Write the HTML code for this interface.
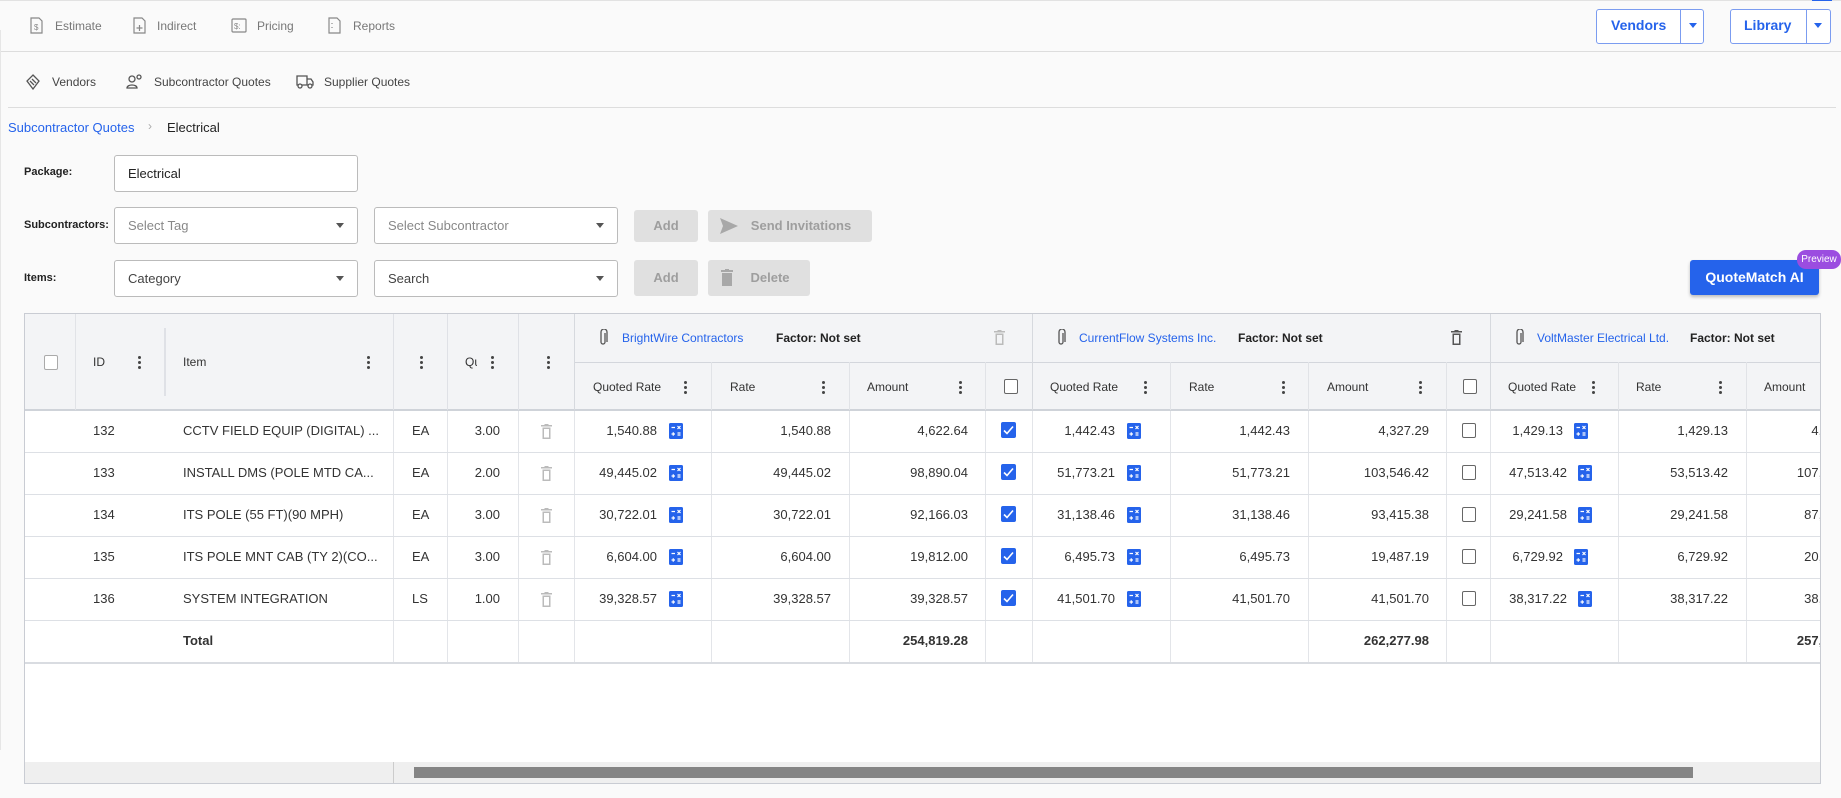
<!DOCTYPE html>
<html><head><meta charset="utf-8"><style>
*{box-sizing:border-box;margin:0;padding:0}
body{width:1841px;height:798px;background:#fafafa;font-family:"Liberation Sans",sans-serif;color:#333;position:relative;overflow:hidden;font-size:13px}
.a{position:absolute;white-space:nowrap}
.nav{font-size:12px;color:#777;top:19px}
.nav2{font-size:12px;color:#444;top:75px}
.lbl{font-size:11px;font-weight:bold;color:#222}
.inp{position:absolute;border:1px solid #bbb;border-radius:3px;background:#fff;height:37px;line-height:35px;padding-left:13px;font-size:13px}
.ph{color:#888}
.car{position:absolute;right:13px;top:15px;width:0;height:0;border-left:4px solid transparent;border-right:4px solid transparent;border-top:5px solid #555}
.btn{position:absolute;background:#e0e0e0;color:#9e9e9e;font-weight:bold;border-radius:3px;height:32px;line-height:32px;text-align:center;font-size:13px}
.vl{position:absolute;top:0;width:1px;background:#e3e5e9}
.hl{position:absolute;left:0;height:1px;background:#dde0e5}
.r{position:absolute;height:42px;line-height:42px;white-space:nowrap}
.rt{text-align:right}
.dots{position:absolute;width:3px}
.dots i{display:block;width:3px;height:3px;border-radius:2px;background:#444;margin-bottom:2px}
.cb{position:absolute;width:14px;height:15px;border:1.5px solid #666;border-radius:2px;background:#fff}
.hd{position:absolute;font-size:12px;color:#333}
.vn{color:#2563eb;font-size:12px}
.fc{font-weight:bold;font-size:12px;color:#222}
</style></head><body>
<div class="a" style="left:0;top:0;width:1841px;height:1px;background:#e2e2e2"></div>
<div class="a" style="left:1812px;top:0;width:20px;height:1px;background:#2563eb"></div>
<svg class="a" style="left:30px;top:17px" width="13" height="17" viewBox="0 0 13 17" fill="none" stroke="#888" stroke-width="1.2"><path d="M1 1h8l3 3v12H1z"/><text x="4" y="13" font-size="8" fill="#888" stroke="none" font-family="Liberation Sans">$</text></svg>
<div class="a nav" style="left:55px">Estimate</div>
<svg class="a" style="left:133px;top:17px" width="13" height="17" viewBox="0 0 13 17" fill="none" stroke="#888" stroke-width="1.2"><path d="M1 1h8l3 3v12H1z M6.5 8v6 M3.5 11h6"/></svg>
<div class="a nav" style="left:157px">Indirect</div>
<svg class="a" style="left:231px;top:18px" width="16" height="15" viewBox="0 0 16 15" fill="none" stroke="#888" stroke-width="1.2"><rect x="1" y="1" width="14" height="13" rx="1"/><text x="3" y="11" font-size="8" fill="#888" stroke="none" font-family="Liberation Sans">$:</text></svg>
<div class="a nav" style="left:257px">Pricing</div>
<svg class="a" style="left:328px;top:17px" width="13" height="17" viewBox="0 0 13 17" fill="none" stroke="#888" stroke-width="1.2"><path d="M1 1h8l3 3v12H1z M4 6v1 M4 10v1"/></svg>
<div class="a nav" style="left:353px">Reports</div>
<div class="a" style="left:1596px;top:9px;width:108px;height:35px;border:1px solid #7b9cf0;border-radius:3px;background:#fff"></div>
<div class="a" style="left:1680px;top:9px;width:1px;height:35px;background:#7b9cf0"></div>
<div class="a" style="left:1611px;top:17px;color:#2563eb;font-weight:bold;font-size:14px">Vendors</div>
<div class="a" style="left:1689px;top:23px;border-left:4px solid transparent;border-right:4px solid transparent;border-top:5px solid #2563eb"></div>
<div class="a" style="left:1730px;top:9px;width:101px;height:35px;border:1px solid #7b9cf0;border-radius:3px;background:#fff"></div>
<div class="a" style="left:1806px;top:9px;width:1px;height:35px;background:#7b9cf0"></div>
<div class="a" style="left:1744px;top:17px;color:#2563eb;font-weight:bold;font-size:14px">Library</div>
<div class="a" style="left:1814px;top:23px;border-left:4px solid transparent;border-right:4px solid transparent;border-top:5px solid #2563eb"></div>
<div class="a" style="left:0;top:51px;width:1841px;height:1px;background:#ddd"></div>
<svg class="a" style="left:25px;top:74px" width="16" height="16" viewBox="0 0 16 16" fill="none" stroke="#555" stroke-width="1.3"><path d="M8 1l6 6-6 8-6-8z M5 7l4 4 M7 5l4 4"/></svg>
<div class="a nav2" style="left:52px">Vendors</div>
<svg class="a" style="left:126px;top:74px" width="17" height="15" viewBox="0 0 17 15" fill="none" stroke="#555" stroke-width="1.3"><circle cx="6" cy="5" r="3"/><path d="M1 14c0-4 10-4 10 0z"/><circle cx="13" cy="3" r="2"/></svg>
<div class="a nav2" style="left:154px">Subcontractor Quotes</div>
<svg class="a" style="left:296px;top:75px" width="18" height="14" viewBox="0 0 18 14" fill="none" stroke="#555" stroke-width="1.3"><path d="M1 1h10v9H1z M11 4h4l2 3v3h-6"/><circle cx="4" cy="11" r="2" fill="#fafafa"/><circle cx="14" cy="11" r="2" fill="#fafafa"/></svg>
<div class="a nav2" style="left:324px">Supplier Quotes</div>
<div class="a" style="left:8px;top:107px;width:1828px;height:1px;background:#ddd"></div>
<div class="a" style="left:8px;top:120px;color:#2563eb;font-size:13px">Subcontractor Quotes</div>
<div class="a" style="left:148px;top:119px;color:#aaa;font-size:12px">›</div>
<div class="a" style="left:167px;top:120px;font-size:13px;color:#222">Electrical</div>
<div class="a lbl" style="left:24px;top:166px">Package:</div>
<div class="inp" style="left:114px;top:155px;width:244px;color:#222">Electrical</div>
<div class="a lbl" style="left:24px;top:219px">Subcontractors:</div>
<div class="inp ph" style="left:114px;top:207px;width:244px">Select Tag<span class="car"></span></div>
<div class="inp ph" style="left:374px;top:207px;width:244px">Select Subcontractor<span class="car"></span></div>
<div class="btn" style="left:634px;top:210px;width:64px">Add</div>
<div class="btn" style="left:708px;top:210px;width:164px;padding-left:22px">Send Invitations</div>
<svg class="a" style="left:720px;top:218px" width="18" height="16" viewBox="0 0 18 16"><path d="M0 0l18 8-18 8 3-8z" fill="#a8a8a8"/></svg>
<div class="a lbl" style="left:24px;top:272px">Items:</div>
<div class="inp" style="left:114px;top:260px;width:244px;color:#444">Category<span class="car"></span></div>
<div class="inp" style="left:374px;top:260px;width:244px;color:#444">Search<span class="car"></span></div>
<div class="btn" style="left:634px;top:260px;width:64px;height:36px;line-height:36px">Add</div>
<div class="btn" style="left:708px;top:260px;width:102px;height:36px;line-height:36px;padding-left:22px">Delete</div>
<svg class="a" style="left:721px;top:269px" width="12" height="17" viewBox="0 0 12 17"><path d="M0 1h12v2H0z M4 0h4v1H4z M1 4h10v13H1z" fill="#a8a8a8"/></svg>
<div class="a" style="left:1690px;top:260px;width:129px;height:35px;background:#2563eb;border-radius:3px;color:#fff;font-weight:bold;font-size:14px;line-height:35px;text-align:center;box-shadow:0 2px 3px rgba(0,0,0,.25)">QuoteMatch AI</div>
<div class="a" style="left:1797px;top:250px;width:44px;height:19px;background:#9b4de0;border-radius:9px;color:#fff;font-size:10px;line-height:19px;text-align:center">Preview</div>

<div class="a" style="left:24px;top:313px;width:1797px;height:471px;border:1px solid #c9ccd3;overflow:hidden;background:#fff">
<div class="a" style="left:-25px;top:-314px;width:1900px;height:800px">
 <div class="a" style="left:0;top:313px;width:1900px;height:97px;background:#f3f4f6"></div>
 <div class="a" style="left:574px;top:362px;width:1300px;height:1px;background:#d3d6dc"></div>
 <div class="a" style="left:0;top:409px;width:1900px;height:2px;background:#cfd3d9"></div>
 <div class="vl" style="left:75px;top:313px;height:97px;background:#e1e3e7"></div>
 <div class="vl" style="left:164px;top:328px;height:68px;background:#dfe1e6;width:2px"></div>
 <div class="vl" style="left:393px;top:313px;height:97px;background:#dfe1e6"></div>
 <div class="vl" style="left:447px;top:313px;height:97px;background:#dfe1e6"></div>
 <div class="vl" style="left:518px;top:313px;height:97px;background:#dfe1e6"></div>
 <div class="vl" style="left:574px;top:313px;height:97px;background:#d6d9de"></div>
 <div class="vl" style="left:1032px;top:313px;height:97px;background:#d6d9de"></div>
 <div class="vl" style="left:1490px;top:313px;height:97px;background:#d6d9de"></div>
 <div class="vl" style="left:711px;top:362px;height:48px;background:#e1e3e7"></div>
 <div class="vl" style="left:849px;top:362px;height:48px;background:#e1e3e7"></div>
 <div class="vl" style="left:985px;top:362px;height:48px;background:#e1e3e7"></div>
 <div class="vl" style="left:1170px;top:362px;height:48px;background:#e1e3e7"></div>
 <div class="vl" style="left:1308px;top:362px;height:48px;background:#e1e3e7"></div>
 <div class="vl" style="left:1446px;top:362px;height:48px;background:#e1e3e7"></div>
 <div class="vl" style="left:1618px;top:362px;height:48px;background:#e1e3e7"></div>
 <div class="vl" style="left:1746px;top:362px;height:48px;background:#e1e3e7"></div>
 <div class="cb" style="left:44px;top:355px;border-color:#aaa"></div>
 <div class="hd" style="left:93px;top:355px">ID</div>
 <div class="dots" style="left:138px;top:356px"><i></i><i></i><i></i></div>
 <div class="hd" style="left:183px;top:355px">Item</div>
 <div class="dots" style="left:367px;top:356px"><i></i><i></i><i></i></div>
 <div class="dots" style="left:420px;top:356px"><i></i><i></i><i></i></div>
 <div class="hd" style="left:465px;top:355px;width:12px;overflow:hidden">Qu</div>
 <div class="dots" style="left:491px;top:356px"><i></i><i></i><i></i></div>
 <div class="dots" style="left:547px;top:356px"><i></i><i></i><i></i></div>
 <svg class="a" style="left:599px;top:329px" width="9" height="17" viewBox="0 0 9 17" fill="none" stroke="#555" stroke-width="1.3"><path d="M6 4v9a2 2 0 01-4 0V3a3 3 0 016 0v10"/></svg>
 <div class="a vn" style="left:622px;top:331px">BrightWire Contractors</div>
 <div class="a fc" style="left:776px;top:331px">Factor: Not set</div>
 <svg class="a" style="left:994px;top:330px" width="11" height="15" viewBox="0 0 11 15"><path d="M0 1h11v1.5H0z M3.5 0h4v1h-4z M1.5 3.5h8V15h-8z M3 5v8.5h5V5z" fill="#bbb" fill-rule="evenodd"/></svg>
 <svg class="a" style="left:1057px;top:329px" width="9" height="17" viewBox="0 0 9 17" fill="none" stroke="#555" stroke-width="1.3"><path d="M6 4v9a2 2 0 01-4 0V3a3 3 0 016 0v10"/></svg>
 <div class="a vn" style="left:1079px;top:331px">CurrentFlow Systems Inc.</div>
 <div class="a fc" style="left:1238px;top:331px">Factor: Not set</div>
 <svg class="a" style="left:1451px;top:330px" width="11" height="15" viewBox="0 0 11 15"><path d="M0 1h11v1.5H0z M3.5 0h4v1h-4z M1.5 3.5h8V15h-8z M3 5v8.5h5V5z" fill="#555" fill-rule="evenodd"/></svg>
 <svg class="a" style="left:1515px;top:329px" width="9" height="17" viewBox="0 0 9 17" fill="none" stroke="#555" stroke-width="1.3"><path d="M6 4v9a2 2 0 01-4 0V3a3 3 0 016 0v10"/></svg>
 <div class="a vn" style="left:1537px;top:331px">VoltMaster Electrical Ltd.</div>
 <div class="a fc" style="left:1690px;top:331px">Factor: Not set</div>
 <div class="hd" style="left:593px;top:380px">Quoted Rate</div><div class="dots" style="left:684px;top:381px"><i></i><i></i><i></i></div>
 <div class="hd" style="left:730px;top:380px">Rate</div><div class="dots" style="left:822px;top:381px"><i></i><i></i><i></i></div>
 <div class="hd" style="left:867px;top:380px">Amount</div><div class="dots" style="left:959px;top:381px"><i></i><i></i><i></i></div>
 <div class="cb" style="left:1004px;top:379px"></div>
 <div class="hd" style="left:1050px;top:380px">Quoted Rate</div><div class="dots" style="left:1144px;top:381px"><i></i><i></i><i></i></div>
 <div class="hd" style="left:1189px;top:380px">Rate</div><div class="dots" style="left:1282px;top:381px"><i></i><i></i><i></i></div>
 <div class="hd" style="left:1327px;top:380px">Amount</div><div class="dots" style="left:1419px;top:381px"><i></i><i></i><i></i></div>
 <div class="cb" style="left:1463px;top:379px"></div>
 <div class="hd" style="left:1508px;top:380px">Quoted Rate</div><div class="dots" style="left:1592px;top:381px"><i></i><i></i><i></i></div>
 <div class="hd" style="left:1636px;top:380px">Rate</div><div class="dots" style="left:1719px;top:381px"><i></i><i></i><i></i></div>
 <div class="hd" style="left:1764px;top:380px">Amount</div>
 <div class="vl" style="left:393px;top:411px;height:251px"></div>
 <div class="vl" style="left:447px;top:411px;height:251px"></div>
 <div class="vl" style="left:518px;top:411px;height:251px"></div>
 <div class="vl" style="left:574px;top:411px;height:251px"></div>
 <div class="vl" style="left:711px;top:411px;height:251px"></div>
 <div class="vl" style="left:849px;top:411px;height:251px"></div>
 <div class="vl" style="left:985px;top:411px;height:251px"></div>
 <div class="vl" style="left:1032px;top:411px;height:251px"></div>
 <div class="vl" style="left:1170px;top:411px;height:251px"></div>
 <div class="vl" style="left:1308px;top:411px;height:251px"></div>
 <div class="vl" style="left:1446px;top:411px;height:251px"></div>
 <div class="vl" style="left:1490px;top:411px;height:251px"></div>
 <div class="vl" style="left:1618px;top:411px;height:251px"></div>
 <div class="vl" style="left:1746px;top:411px;height:251px"></div>
 <div class="hl" style="top:452px;width:1900px"></div>
 <div class="hl" style="top:494px;width:1900px"></div>
 <div class="hl" style="top:536px;width:1900px"></div>
 <div class="hl" style="top:578px;width:1900px"></div>
 <div class="hl" style="top:620px;width:1900px"></div>
 <div class="hl" style="top:662px;width:1900px;background:#d9dce1;height:2px"></div>
 <div id="rows"></div>
 <div class="a" style="left:0;top:762px;width:1900px;height:40px;background:#efefef"></div>
 <div class="vl" style="left:393px;top:762px;height:40px;background:#ccc"></div>
 <div class="a" style="left:414px;top:767px;width:1279px;height:11px;background:#858585"></div>
</div></div>
<div class="a" style="left:0;top:30px;width:1px;height:720px;background:#e6e6e6"></div>
<script>
var calc='<svg viewBox="0 0 14 16" width="14" height="16"><rect width="14" height="16" rx="1.5" fill="#2563eb"/><path d="M2.5 4.5h3.5M8.5 3l3 3M11.5 3l-3 3M2.5 11h3.5M4.25 9.25v3.5M8.5 10h3M8.5 12h3" stroke="#fff" stroke-width="1.2"/></svg>';
var trash='<svg width="11" height="15" viewBox="0 0 11 15"><path d="M0 1h11v1.5H0z M3.5 0h4v1h-4z M1.5 3.5h8V15h-8z M3 5v8.5h5V5z" fill="#bbb" fill-rule="evenodd"/></svg>';
var chk='<svg width="15" height="16" viewBox="0 0 15 16"><rect width="15" height="16" rx="2" fill="#2563eb"/><path d="M3 8.5l3 3 6-7" stroke="#fff" stroke-width="1.6" fill="none"/></svg>';
var d=[["132","CCTV FIELD EQUIP (DIGITAL) ...","EA","3.00","1,540.88","1,540.88","4,622.64","1,442.43","1,442.43","4,327.29","1,429.13","1,429.13","4,287.39"],
["133","INSTALL DMS (POLE MTD CA...","EA","2.00","49,445.02","49,445.02","98,890.04","51,773.21","51,773.21","103,546.42","47,513.42","53,513.42","107,026.84"],
["134","ITS POLE (55 FT)(90 MPH)","EA","3.00","30,722.01","30,722.01","92,166.03","31,138.46","31,138.46","93,415.38","29,241.58","29,241.58","87,724.74"],
["135","ITS POLE MNT CAB (TY 2)(CO...","EA","3.00","6,604.00","6,604.00","19,812.00","6,495.73","6,495.73","19,487.19","6,729.92","6,729.92","20,189.76"],
["136","SYSTEM INTEGRATION","LS","1.00","39,328.57","39,328.57","39,328.57","41,501.70","41,501.70","41,501.70","38,317.22","38,317.22","38,317.22"]];
var h='';
function R(t,x,r){return '<div class="r rt" style="top:'+t+'px;right:'+(1900-r)+'px">'+x+'</div>';}
function L(t,x,l,s){return '<div class="r" style="top:'+t+'px;left:'+l+'px;'+(s||'')+'">'+x+'</div>';}
function I(t,x,l,dy){return '<div class="a" style="top:'+(t+dy)+'px;left:'+l+'px;line-height:0">'+x+'</div>';}
d.forEach(function(r,i){var t=410+i*42;
h+=L(t,r[0],93)+L(t,r[1],183,'width:205px;overflow:hidden')+L(t,r[2],412)+R(t,r[3],500)+I(t,trash,541,14);
h+=R(t,r[4],657)+I(t,calc,669,13)+R(t,r[5],831)+R(t,r[6],968)+I(t,chk,1001,12);
h+=R(t,r[7],1115)+I(t,calc,1127,13)+R(t,r[8],1290)+R(t,r[9],1429)+'<div class="cb" style="left:1462px;top:'+(t+13)+'px"></div>';
var q3=[1563,1567,1567,1563,1567][i];
h+=R(t,r[10],q3)+I(t,calc,q3+11,13)+R(t,r[11],1728)+R(t,r[12],1862);});
var t=620;h+=L(t,'<b>Total</b>',183)+R(t,'<b>254,819.28</b>',968)+R(t,'<b>262,277.98</b>',1429)+R(t,'<b>257,545.95</b>',1862);
document.getElementById('rows').outerHTML=h;
</script>
</body></html>
